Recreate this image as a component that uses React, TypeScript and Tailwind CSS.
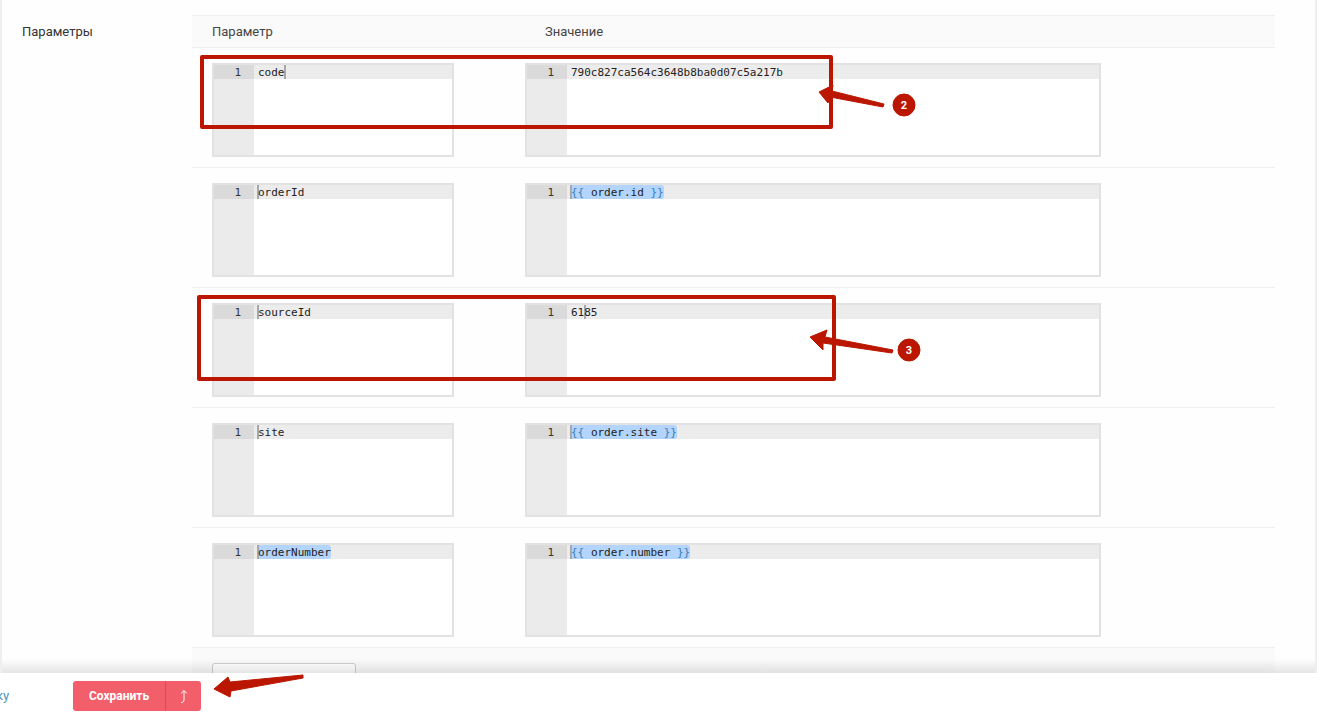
import React from "react";

const mono = "font-['DejaVu_Sans_Mono',monospace] text-[11px] leading-[15px] text-[#222]";

function Twig({ expr }: { expr: string }) {
  return (
    <>
      <span className="text-[#3a7fb5]">{"{{"}</span>
      <span> {expr} </span>
      <span className="text-[#3a7fb5]">{"}}"}</span>
    </>
  );
}

function Editor({
  width,
  text,
  twig,
  selected,
  cursor,
}: {
  width: string;
  text: string;
  twig?: boolean;
  selected?: boolean;
  cursor?: number;
}) {
  return (
    <div className={`${width} h-[94px] border-2 border-[#e2e2e2] bg-white flex`}>
      <div className="w-[40px] bg-[#ebebeb] shrink-0">
        <div className={`${mono} h-[14px] bg-[#dadada] text-right pr-[13px] text-[#333]`}>1</div>
      </div>
      <div className="flex-1 min-w-0">
        <div className={`${mono} h-[14px] bg-[#ececec] pl-[4px] whitespace-pre relative`}>
          {selected && <span className="absolute top-0 left-[4px] h-[14px] bg-[#b3d4fc] rounded-r-[3px]" style={{ width: (text.length + (twig ? 6 : 0)) * 6.62 }} />}
          {cursor !== undefined && (
            <span
              className="absolute top-0 h-[14px] w-[2px] bg-[#a8a8a8]"
              style={{ left: cursor }}
            />
          )}
          <span className="relative">{twig ? <Twig expr={text} /> : text}</span>
        </div>
      </div>
    </div>
  );
}

function Row({
  name,
  value,
  twig,
  nameSelected,
  valueSelected,
  nameCursor,
  valueCursor,
}: {
  name: string;
  value: string;
  twig?: boolean;
  nameSelected?: boolean;
  valueSelected?: boolean;
  nameCursor?: number;
  valueCursor?: number;
}) {
  return (
    <div className="h-[120px] border-b border-[#eeeeee] pt-[15px] pl-[20px] flex bg-[#fefefe]">
      <div className="w-[313px] shrink-0">
        <Editor width="w-[242px]" text={name} selected={nameSelected} cursor={nameCursor} />
      </div>
      <Editor width="w-[576px]" text={value} twig={twig} selected={valueSelected} cursor={valueCursor} />
    </div>
  );
}

export default function App() {
  return (
    <div className="relative h-[714px] w-[1317px] overflow-hidden bg-white flex flex-col font-['Roboto',sans-serif]">
      <main className="relative flex-1 min-h-0 overflow-hidden border-x-2 border-[#efefef] bg-[#fefefe] flex">
        <div className="w-[190px] shrink-0 pl-[20px] pt-[24px] text-[13px] leading-[16px] text-[#333]">Параметры</div>
        <div className="w-[1083px] shrink-0 pt-[15px]">
          <div className="h-[33px] border-y border-[#eeeeee] bg-[#fafafa] flex items-center pl-[20px] text-[13px] text-[#444]">
            <div className="w-[333px]">Параметр</div>
            <div>Значение</div>
          </div>
          <Row name="code" value="790c827ca564c3648b8ba0d07c5a217b" nameCursor={30} />
          <Row name="orderId" value="order.id" twig valueSelected nameCursor={3} valueCursor={3} />
          <Row name="sourceId" value="6185" nameCursor={3} valueCursor={17} />
          <Row name="site" value="order.site" twig valueSelected nameCursor={3} valueCursor={3} />
          <Row name="orderNumber" value="order.number" twig nameSelected valueSelected nameCursor={3} valueCursor={3} />
          <div className="h-[40px] bg-[#fafafa] pt-[15px] pl-[20px]">
            <div className="w-[144px] h-[34px] border border-[#cfcfcf] rounded-[3px] bg-white" />
          </div>
        </div>
        <div className="absolute left-0 right-0 bottom-0 h-[14px] bg-gradient-to-b from-transparent to-black/10" />
      </main>
      <footer className="h-[41px] shrink-0 bg-white flex items-start pt-[8px] relative">
        <div className="w-[73px] shrink-0 pt-[7px] text-[13px] leading-[16px] text-[#4c93c3]">
          <span className="block -ml-[4px]">ку</span>
        </div>
        <div className="w-[128px] h-[30px] rounded-[3px] bg-[#f25f6b] flex text-white text-[12px] font-bold">
          <div className="w-[93px] border-r border-[#d84c58] flex items-center justify-center">Сохранить</div>
          <div className="flex-1 flex items-center justify-center">
            <svg width="10" height="14" viewBox="0 0 10 14" fill="none" stroke="white" strokeWidth="1">
              <path d="M2 13.5c1.5 0 3-.5 3-2.5V1.5M2.2 4.3 5 1.5l2.8 2.8" />
            </svg>
          </div>
        </div>
      </footer>

      <div className="absolute left-[200px] top-[55px] w-[633px] h-[74px] border-4 border-[#bb1600] rounded-[2px]" />
      <div className="absolute left-[197px] top-[295px] w-[639px] h-[86px] border-4 border-[#bb1600] rounded-[2px]" />

      <svg className="absolute inset-0 pointer-events-none" width="1317" height="714" viewBox="0 0 1317 714">
        <g fill="#bb1600" stroke="#bb1600" strokeLinejoin="round" strokeWidth="1">
          <path d="M819 92 L833 85 L832 91 L884 104 L883 107 L830 97 L828 103 Z" />
          <path d="M810 337 L827 330 L825 337 L893 350 L892 353 L823 343 L823 350 Z" />
          <path d="M214 689 L228 677 L230 682 L303 675 L303 678 L231 691 L230 697 Z" />
          <circle cx="904" cy="105" r="11" />
          <circle cx="909" cy="350" r="11" />
        </g>
        <text x="904" y="109" textAnchor="middle" fill="#fff" fontSize="11" fontWeight="700" fontFamily="Roboto, sans-serif">2</text>
        <text x="909" y="354" textAnchor="middle" fill="#fff" fontSize="11" fontWeight="700" fontFamily="Roboto, sans-serif">3</text>
      </svg>
    </div>
  );
}
